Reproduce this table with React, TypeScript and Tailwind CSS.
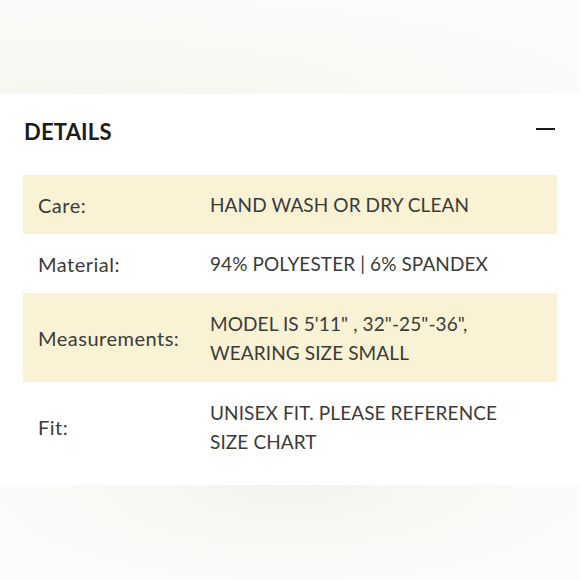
const rows = [
  { label: 'Care:', value: ['HAND WASH OR DRY CLEAN'], tint: true, h: 'h-[59px]' },
  { label: 'Material:', value: ['94% POLYESTER | 6% SPANDEX'], tint: false, h: 'h-[59px]' },
  { label: 'Measurements:', value: ['MODEL IS 5\'11" , 32"-25"-36",', 'WEARING SIZE SMALL'], tint: true, h: 'h-[89px]' },
  { label: 'Fit:', value: ['UNISEX FIT. PLEASE REFERENCE', 'SIZE CHART'], tint: false, h: 'h-[90px]' },
]

export default function App() {
  return (
    <div className="w-[580px] h-[580px] flex flex-col bg-white font-['Lato',sans-serif] overflow-hidden">
      {/* blurred photo strip above */}
      <div className="h-[94px] bg-[radial-gradient(ellipse_at_15%_100%,#f7f5ee,#fbfaf8_60%,#fdfcfc)]" />

      <div className="h-[391px] bg-white px-[23px]">
        <div className="flex items-center justify-between h-[81px] pb-[7px] pl-[1px] pr-[2px]">
          <h2 className="text-[22px] font-bold text-[#1c1c1c] tracking-[0.2px]">DETAILS</h2>
          <div className="w-[19px] h-[2px] mb-[4px] bg-[#1c1c1c]" />
        </div>

        <div className="flex flex-col">
          {rows.map((r) => (
            <div
              key={r.label}
              className={`flex items-center ${r.h} ${r.tint ? 'bg-[#f9f2d5]' : 'bg-white'}`}
            >
              <div className="w-[187px] pl-[15px] text-[20px] tracking-[0.5px] text-[#3b3b38]">{r.label}</div>
              <div className="text-[19px] leading-[29px] tracking-[0.1px] text-[#3b3b38]">
                {r.value.map((v) => (
                  <div key={v}>{v}</div>
                ))}
              </div>
            </div>
          ))}
        </div>
      </div>

      {/* blurred strip below */}
      <div className="flex-1 bg-[radial-gradient(ellipse_at_50%_0%,#f4f3ee,#fafaf8_60%,#fcfcfc)]" />
    </div>
  )
}
